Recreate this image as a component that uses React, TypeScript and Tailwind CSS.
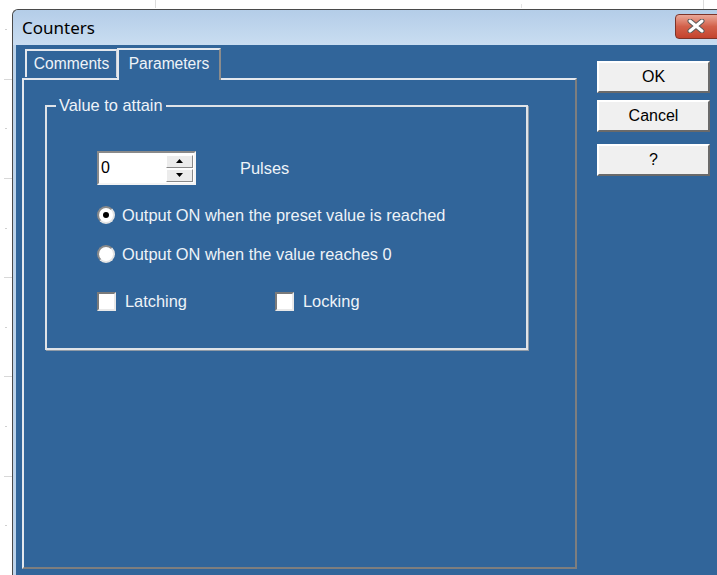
import React from 'react';

const ui = { fontFamily: '"Liberation Sans", Arial, sans-serif' };
const title = { fontFamily: '"Noto Sans", "Open Sans", sans-serif' };

const Radio = ({ checked, label }: { checked?: boolean; label: string }) => (
  <div className="flex items-center h-[18px]">
    <div className="w-[18px] h-[18px] rounded-full bg-white border-2 border-t-[#8a8a8a] border-l-[#8a8a8a] border-r-[#e4e4e4] border-b-[#e4e4e4] flex items-center justify-center">
      {checked && <div className="w-[6px] h-[6px] rounded-full bg-black" />}
    </div>
    <span className="ml-[7px] text-[16.4px] text-[#eef3f8]">{label}</span>
  </div>
);

const Check = ({ label }: { label: string }) => (
  <div className="flex items-center h-[19px]">
    <div className="w-[19px] h-[19px] bg-white border-2 border-t-[#7a7a7a] border-l-[#7a7a7a] border-r-[#e8e8e8] border-b-[#e8e8e8]" />
    <span className="ml-[9px] text-[16.4px] text-[#eef3f8]">{label}</span>
  </div>
);

const Button = ({ children, className = '' }: { children: React.ReactNode; className?: string }) => (
  <div
    className={`w-[113px] h-[32px] bg-[#f0f0f0] border-2 border-t-white border-l-white border-r-[#6a6a6a] border-b-[#6a6a6a] flex items-center justify-center text-[16px] text-black ${className}`}
  >
    {children}
  </div>
);

const SpinButton = ({ up }: { up?: boolean }) => (
  <div className="h-[13px] bg-[#ececec] border border-t-white border-l-white border-r-[#8a8a8a] border-b-[#8a8a8a] flex items-center justify-center">
    <svg width="7" height="4" viewBox="0 0 7 4">
      {up ? <path d="M3.5 0 L7 4 L0 4 Z" fill="#000" /> : <path d="M0 0 L7 0 L3.5 4 Z" fill="#000" />}
    </svg>
  </div>
);

export default function App() {
  return (
    <div className="w-[717px] h-[575px] overflow-hidden bg-white flex flex-col" style={ui}>
      {/* sheet gridline ticks above the window */}
      <div className="h-[9px] flex shrink-0">
        <div className="w-[155px]" />
        <div className="w-px h-[8px] bg-[#dcdcdc]" />
        <div className="w-[365px]" />
        <div className="w-px h-[4px] mt-[4px] bg-[#e4e4e4]" />
        <div className="w-[181px]" />
        <div className="w-px h-[9px] bg-[#dcdcdc]" />
      </div>
      <div className="flex flex-1 min-h-0">
        {/* sheet gridline ticks left of the window */}
        <div className="w-[12px] shrink-0 flex flex-col pt-[20px]">
          {[0, 1, 2, 3, 4, 5, 6, 7, 8, 9, 10].map((i) => (
            <div key={i} className="h-[52px] flex">
              {i % 2 === 0 ? (
                <div className="ml-[5px] w-[2px] h-px bg-[#d0d0d0]" />
              ) : (
                <div className="ml-[4px] w-[8px] h-px bg-[#d8d8d8]" />
              )}
            </div>
          ))}
        </div>

        {/* dialog window */}
        <div className="flex-1 flex flex-col border-l border-t border-[#4a4a4a] rounded-tl-[6px] bg-[#bcd3ea]">
          <div className="h-[35px] shrink-0 flex items-center bg-gradient-to-b from-[#b4cde8] to-[#c9ddf1] rounded-tl-[6px]">
            <span className="ml-[9px] text-[17px] text-black" style={title}>
              Counters
            </span>
            <div className="ml-auto mr-[-4px] w-[46px] h-[25px] mt-[-3px] rounded-[4px] border border-[#7d3429] bg-gradient-to-b from-[#e9a899] via-[#d2604a] to-[#c4432e] flex items-center justify-start pl-[10px]">
              <svg width="20" height="14" viewBox="0 0 20 14">
                <path d="M4 2 L16 12 M16 2 L4 12" stroke="#5a5a5a" strokeWidth="5" strokeLinecap="round" />
                <path d="M4 2 L16 12 M16 2 L4 12" stroke="#ffffff" strokeWidth="3" strokeLinecap="round" />
              </svg>
            </div>
          </div>

          <div className="flex-1 ml-[3px] bg-[#31659a] flex">
            {/* tab control */}
            <div className="ml-[6px] flex flex-col">
              <div className="h-[33px] flex items-end pl-[3px]">
                <div className="h-[28px] w-[92px] mb-[1px] border-t-2 border-l-2 border-r border-t-[#e4e8ee] border-l-[#e4e8ee] border-r-[#cfd4da] flex items-center justify-center text-[15.6px] text-[#eef3f8]">
                  Comments
                </div>
                <div className="h-[32px] w-[104px] mb-[-2px] relative z-10 bg-[#31659a] border-t-2 border-l-2 border-r-2 border-t-[#e4e8ee] border-l-[#e4e8ee] border-r-[#8c8c8c] flex items-center justify-center text-[15.6px] text-[#eef3f8] pb-[2px]">
                  Parameters
                </div>
              </div>
              <div className="w-[555px] h-[491px] border-2 border-t-[#e4e8ee] border-l-[#e4e8ee] border-r-[#7e7e7e] border-b-[#7e7e7e]">
                {/* group box */}
                <div className="ml-[21px] mt-[25px] w-[483px] h-[245px] border-2 border-[#dfe3e8] shadow-[1px_1px_0_#8f9aa6] relative">
                  <div className="absolute left-[9px] top-[-11px] px-[3px] bg-[#31659a] text-[16.4px] leading-[18px] text-[#eef3f8]">
                    Value to attain
                  </div>
                  <div className="ml-[50px] mt-[44px] flex flex-col">
                    <div className="flex items-center">
                      <div className="w-[99px] h-[34px] bg-white border-2 border-t-[#8a8a8a] border-l-[#8a8a8a] border-r-[#f4f4f4] border-b-[#f4f4f4] flex">
                        <div className="flex-1 flex items-center pl-[2px] text-[16px] text-black">0</div>
                        <div className="w-[27px] mr-[1px] flex flex-col justify-center gap-[1px]">
                          <SpinButton up />
                          <SpinButton />
                        </div>
                      </div>
                      <span className="ml-[44px] text-[16.4px] text-[#eef3f8]">Pulses</span>
                    </div>
                    <div className="mt-[21px]">
                      <Radio checked label="Output ON when the preset value is reached" />
                    </div>
                    <div className="mt-[21px]">
                      <Radio label="Output ON when the value reaches 0" />
                    </div>
                    <div className="mt-[29px] flex">
                      <div className="w-[178px]">
                        <Check label="Latching" />
                      </div>
                      <Check label="Locking" />
                    </div>
                  </div>
                </div>
              </div>
            </div>

            {/* dialog buttons */}
            <div className="ml-[20px] pt-[16px] flex flex-col">
              <Button>OK</Button>
              <Button className="mt-[7px]">Cancel</Button>
              <Button className="mt-[12px]">?</Button>
            </div>
          </div>
        </div>
      </div>
    </div>
  );
}
